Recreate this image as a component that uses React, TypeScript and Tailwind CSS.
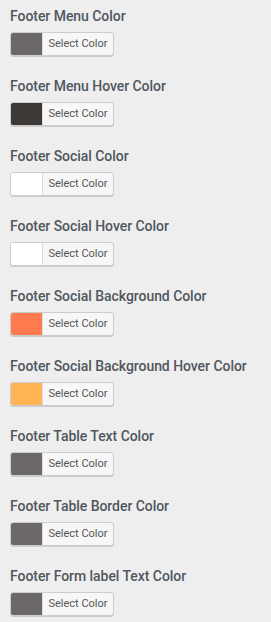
import React from "react";

const items: { label: string; color: string }[] = [
  { label: "Footer Menu Color", color: "#6b6867" },
  { label: "Footer Menu Hover Color", color: "#3b3835" },
  { label: "Footer Social Color", color: "#ffffff" },
  { label: "Footer Social Hover Color", color: "#ffffff" },
  { label: "Footer Social Background Color", color: "#ff7b4f" },
  { label: "Footer Social Background Hover Color", color: "#ffb555" },
  { label: "Footer Table Text Color", color: "#6b6867" },
  { label: "Footer Table Border Color", color: "#6b6867" },
  { label: "Footer Form label Text Color", color: "#6b6867" },
];

export default function App() {
  return (
    <div
      className="w-[271px] h-[622px] bg-[#eeeeee] px-[10px] pt-[6px] overflow-hidden"
      style={{ fontFamily: "Roboto, 'Liberation Sans', sans-serif" }}
    >
      {items.map((it) => (
        <div key={it.label} className="h-[70px]">
          <div className="text-[14px] leading-[20px] font-medium tracking-[-0.05px] text-[#50575e]">{it.label}</div>
          <button className="mt-[6px] flex h-[24px] w-[104px] overflow-hidden rounded-[3px] border border-[#cccccc] bg-[#f7f7f7] shadow-[0_1px_0_#cccccc] p-0">
            <span className="block h-full w-[31px] shrink-0" style={{ backgroundColor: it.color }} />
            <span className="flex-1 border-l border-[#dddddd] text-[11px] leading-[22px] text-[#555555] text-center">Select Color</span>
          </button>
        </div>
      ))}
    </div>
  );
}
